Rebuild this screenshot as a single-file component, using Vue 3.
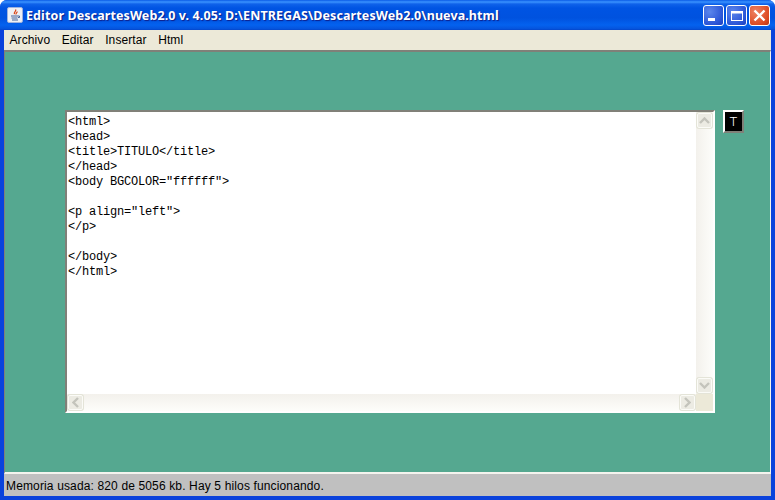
<script setup>
const menus = ['Archivo', 'Editar', 'Insertar', 'Html']
const code = `<html>
<head>
<title>TITULO</title>
</head>
<body BGCOLOR="ffffff">

<p align="left">
</p>

</body>
</html>`
</script>

<template>
  <div class="window">
    <header class="titlebar">
      <svg class="appicon" width="16" height="16" viewBox="0 0 16 16">
        <rect x="0.5" y="0.5" width="15" height="15" rx="1.5" fill="#eef0f4" stroke="#9fb2dd" />
        <path d="M8.5 2.5c1.5 1.6-2.2 2.7-1 4.6M10 4.5c.6 1.2-1.6 1.7-.9 3" fill="none" stroke="#d9481c" stroke-width="1.3" />
        <path d="M4 9h7M4.5 11h6M5 13h6" stroke="#44639a" stroke-width="1" fill="none" />
        <path d="M11 9h1.5v1.5H11" fill="none" stroke="#44639a" />
      </svg>
      <span class="title">Editor DescartesWeb2.0 v. 4.05: D:\ENTREGAS\DescartesWeb2.0\nueva.html</span>
      <div class="controls">
        <button class="ctl blue">
          <svg width="19" height="19" viewBox="0 0 19 19"><rect x="4" y="12" width="7" height="3" fill="#fff" /></svg>
        </button>
        <button class="ctl blue">
          <svg width="19" height="19" viewBox="0 0 19 19"><rect x="4.5" y="5.5" width="11" height="9" fill="none" stroke="#fff" /><rect x="4" y="5" width="12" height="2.5" fill="#fff" /></svg>
        </button>
        <button class="ctl red">
          <svg width="19" height="19" viewBox="0 0 19 19"><path d="M4.5 4.5l10 10M14.5 4.5l-10 10" stroke="#fff" stroke-width="2.4" /></svg>
        </button>
      </div>
    </header>

    <div class="body">
      <nav class="menubar">
        <span v-for="m in menus" :key="m" class="menu">{{ m }}</span>
      </nav>

      <main class="canvas">
        <div class="editor">
          <div class="editor-top">
            <pre class="code">{{ code }}</pre>
            <div class="vbar">
              <span class="sbtn">
                <svg width="11" height="7" viewBox="0 0 11 7"><path d="M1 6l4.5-4.5L10 6" fill="none" stroke="#c4c4bc" stroke-width="2.4" /></svg>
              </span>
              <span class="track-v"></span>
              <span class="sbtn">
                <svg width="11" height="7" viewBox="0 0 11 7"><path d="M1 1l4.5 4.5L10 1" fill="none" stroke="#c4c4bc" stroke-width="2.4" /></svg>
              </span>
            </div>
          </div>
          <div class="hbar">
            <span class="sbtn">
              <svg width="7" height="11" viewBox="0 0 7 11"><path d="M6 1L1.5 5.5 6 10" fill="none" stroke="#c4c4bc" stroke-width="2.4" /></svg>
            </span>
            <span class="track-h"></span>
            <span class="sbtn">
              <svg width="7" height="11" viewBox="0 0 7 11"><path d="M1 1l4.5 4.5L1 10" fill="none" stroke="#c4c4bc" stroke-width="2.4" /></svg>
            </span>
            <span class="corner"></span>
          </div>
        </div>
        <button class="tbtn">T</button>
      </main>

      <footer class="status">Memoria usada: 820 de 5056 kb. Hay 5 hilos funcionando.</footer>
    </div>
  </div>
</template>

<style>
html, body { margin: 0; overflow: hidden; }
</style>

<style scoped>
.window {
  width: 775px;
  height: 500px;
  display: flex;
  flex-direction: column;
  background: #0a42dc;
  border-radius: 7px 7px 0 0;
  overflow: hidden;
  font-family: "Liberation Sans", Arial, sans-serif;
}
.titlebar {
  height: 30px;
  flex: none;
  display: flex;
  align-items: center;
  padding: 0 5px 0 7px;
  background: linear-gradient(#0a5be6 0, #3a93ff 2px, #0f62ea 4px, #0054e3 8px, #0052df 18px, #0462ef 25px, #0553dc 29px, #0342c6 30px);
}
.appicon { flex: none; }
.title {
  margin-left: 3px;
  flex: 1;
  color: #fff;
  font: bold 12.5px "Noto Sans", sans-serif;
  letter-spacing: 0.1px;
  white-space: nowrap;
  text-shadow: 1px 1px 1px #0f1e88;
}
.controls { display: flex; gap: 2px; }
.ctl {
  width: 21px;
  height: 21px;
  padding: 0;
  border: 1px solid #fff;
  border-radius: 3px;
  box-sizing: border-box;
  display: block;
}
.ctl svg { display: block; }
.blue { background: radial-gradient(circle at 30% 30%, #5b86ec, #2b55d6 70%, #1c3fc0); }
.red { background: radial-gradient(circle at 30% 30%, #ee8263, #dd4a22 70%, #b93614); }
.body {
  flex: 1;
  min-height: 0;
  margin: 0 4px 4px;
  display: flex;
  flex-direction: column;
}
.menubar {
  height: 20px;
  flex: none;
  display: flex;
  align-items: center;
  gap: 11.5px;
  padding-left: 5.5px;
  background: #ece9d8;
  font-size: 12px;
  letter-spacing: 0.1px;
  color: #000;
}
.canvas {
  flex: 1;
  min-height: 0;
  display: flex;
  align-items: flex-start;
  gap: 8px;
  padding: 58px 0 0 60px;
  background: #55a890;
  border-top: 2px solid #808078;
  border-left: 1px solid #808078;
  border-right: 1px solid #f4f4ee;
  border-bottom: 2px solid #f4f4ee;
  box-sizing: border-box;
}
.editor {
  width: 650px;
  height: 303px;
  box-sizing: border-box;
  flex: none;
  display: flex;
  flex-direction: column;
  background: #fff;
  border-style: solid;
  border-width: 2px;
  border-color: #808078 #fff #fff #808078;
}
.editor-top { flex: 1; min-height: 0; display: flex; }
.code {
  flex: 1;
  margin: 0;
  padding: 3px 0 0 1px;
  font: 12px/15px "Liberation Mono", monospace;
  letter-spacing: -0.2px;
  color: #000;
}
.vbar {
  width: 17px;
  flex: none;
  display: flex;
  flex-direction: column;
  background: linear-gradient(90deg, #f3f1ec, #fdfdfa);
}
.track-v, .track-h { flex: 1; }
.hbar {
  height: 17px;
  flex: none;
  display: flex;
  background: linear-gradient(#f3f1ec, #fdfdfa);
}
.sbtn {
  width: 15px;
  height: 15px;
  margin: 1px;
  box-sizing: border-box;
  flex: none;
  display: flex;
  align-items: center;
  justify-content: center;
  background: #ecebe3;
  border: 1px solid #fbfbf7;
  border-radius: 2px;
  box-shadow: 0 0 0 1px #e4e4d8;
}
.corner { width: 17px; height: 17px; flex: none; background: #ece9d8; }
.tbtn {
  width: 21px;
  height: 23px;
  flex: none;
  padding: 0;
  background: #000;
  color: #fff;
  font: 300 13px Roboto, sans-serif;
  border-style: solid;
  border-width: 2px;
  border-color: #fff #808078 #808078 #fff;
  box-sizing: border-box;
}
.status {
  height: 22px;
  flex: none;
  display: flex;
  align-items: center;
  padding: 1px 0 0 2px;
  box-sizing: border-box;
  background: #c0c0c0;
  font-size: 12px;
  letter-spacing: 0.14px;
  color: #000;
}
</style>
